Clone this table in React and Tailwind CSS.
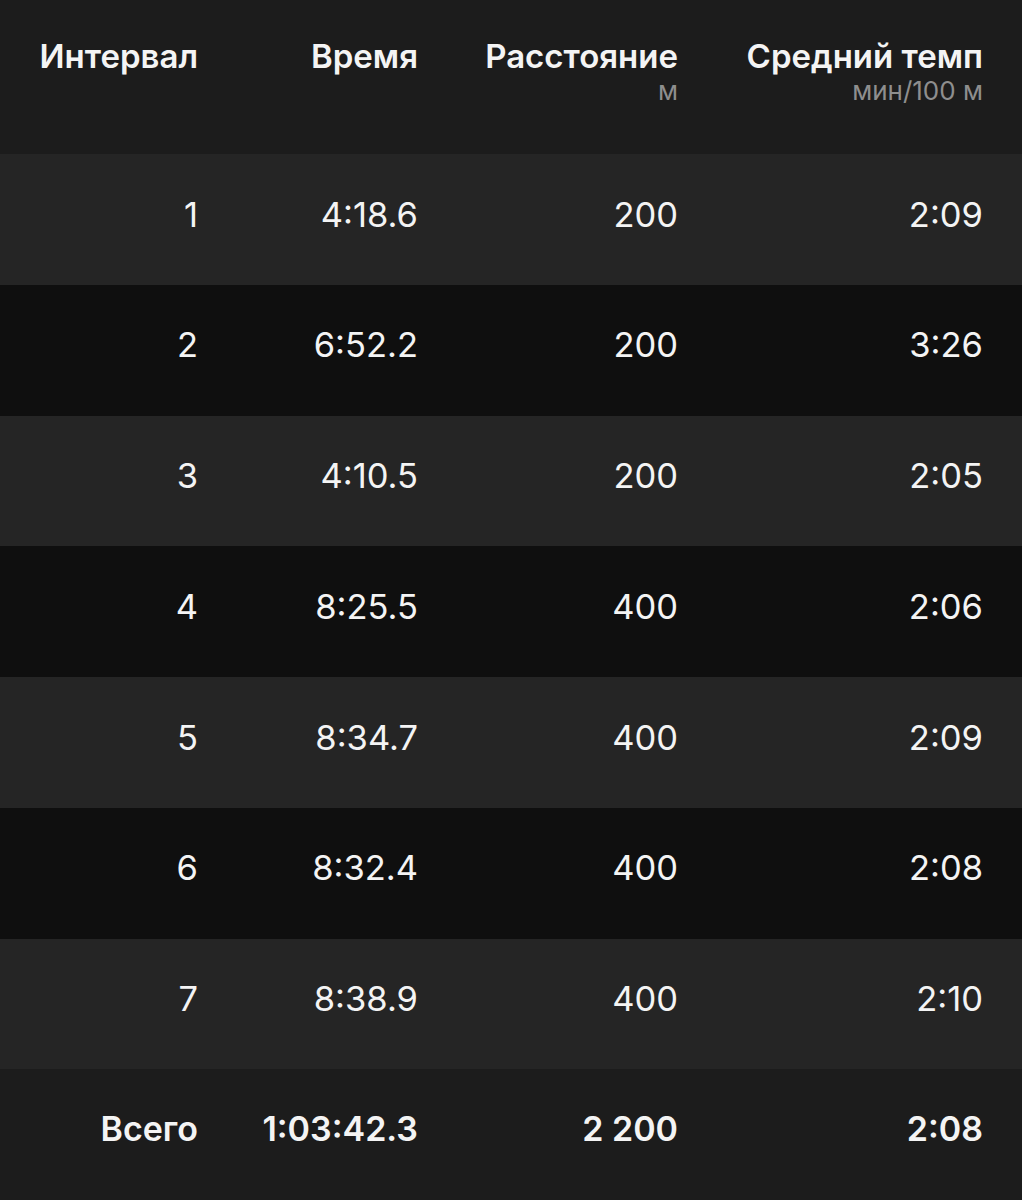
import React from "react";

const rows = [
  ["1", "4:18.6", "200", "2:09"],
  ["2", "6:52.2", "200", "3:26"],
  ["3", "4:10.5", "200", "2:05"],
  ["4", "8:25.5", "400", "2:06"],
  ["5", "8:34.7", "400", "2:09"],
  ["6", "8:32.4", "400", "2:08"],
  ["7", "8:38.9", "400", "2:10"],
];

const grid = "grid grid-cols-[198px_220px_260px_305px] pr-[39px] text-right";

export default function App() {
  return (
    <div
      className="w-[1022px] h-[1200px] bg-[#1c1c1c] text-[#f4f4f4] overflow-hidden"
      style={{ fontFamily: "Inter, 'Noto Sans', sans-serif" }}
    >
      {/* header */}
      <div className={grid + " h-[154px] pt-[36px] items-start"}>
        <div className="text-[33px] leading-[40px] font-semibold">Интервал</div>
        <div className="text-[33px] leading-[40px] font-semibold">Время</div>
        <div className="flex flex-col">
          <span className="text-[33px] leading-[40px] font-semibold">Расстояние</span>
          <span className="text-[26px] leading-[30px] text-[#8e8e8e]">м</span>
        </div>
        <div className="flex flex-col">
          <span className="text-[33px] leading-[40px] font-semibold">Средний темп</span>
          <span className="text-[26px] leading-[30px] text-[#8e8e8e]">мин/100 м</span>
        </div>
      </div>

      {rows.map((r, i) => (
        <div
          key={r[0]}
          className={
            grid +
            " h-[130.75px] items-center pb-[10px] text-[34.5px] " +
            (i % 2 === 0 ? "bg-[#252525]" : "bg-[#0f0f0f]")
          }
        >
          <div>{r[0]}</div>
          <div>{r[1]}</div>
          <div>{r[2]}</div>
          <div>{r[3]}</div>
        </div>
      ))}

      {/* total */}
      <div className={grid + " h-[130.75px] items-center pb-[12px] text-[34px] font-semibold bg-[#1c1c1c]"}>
        <div>Всего</div>
        <div>1:03:42.3</div>
        <div>2 200</div>
        <div>2:08</div>
      </div>
    </div>
  );
}
